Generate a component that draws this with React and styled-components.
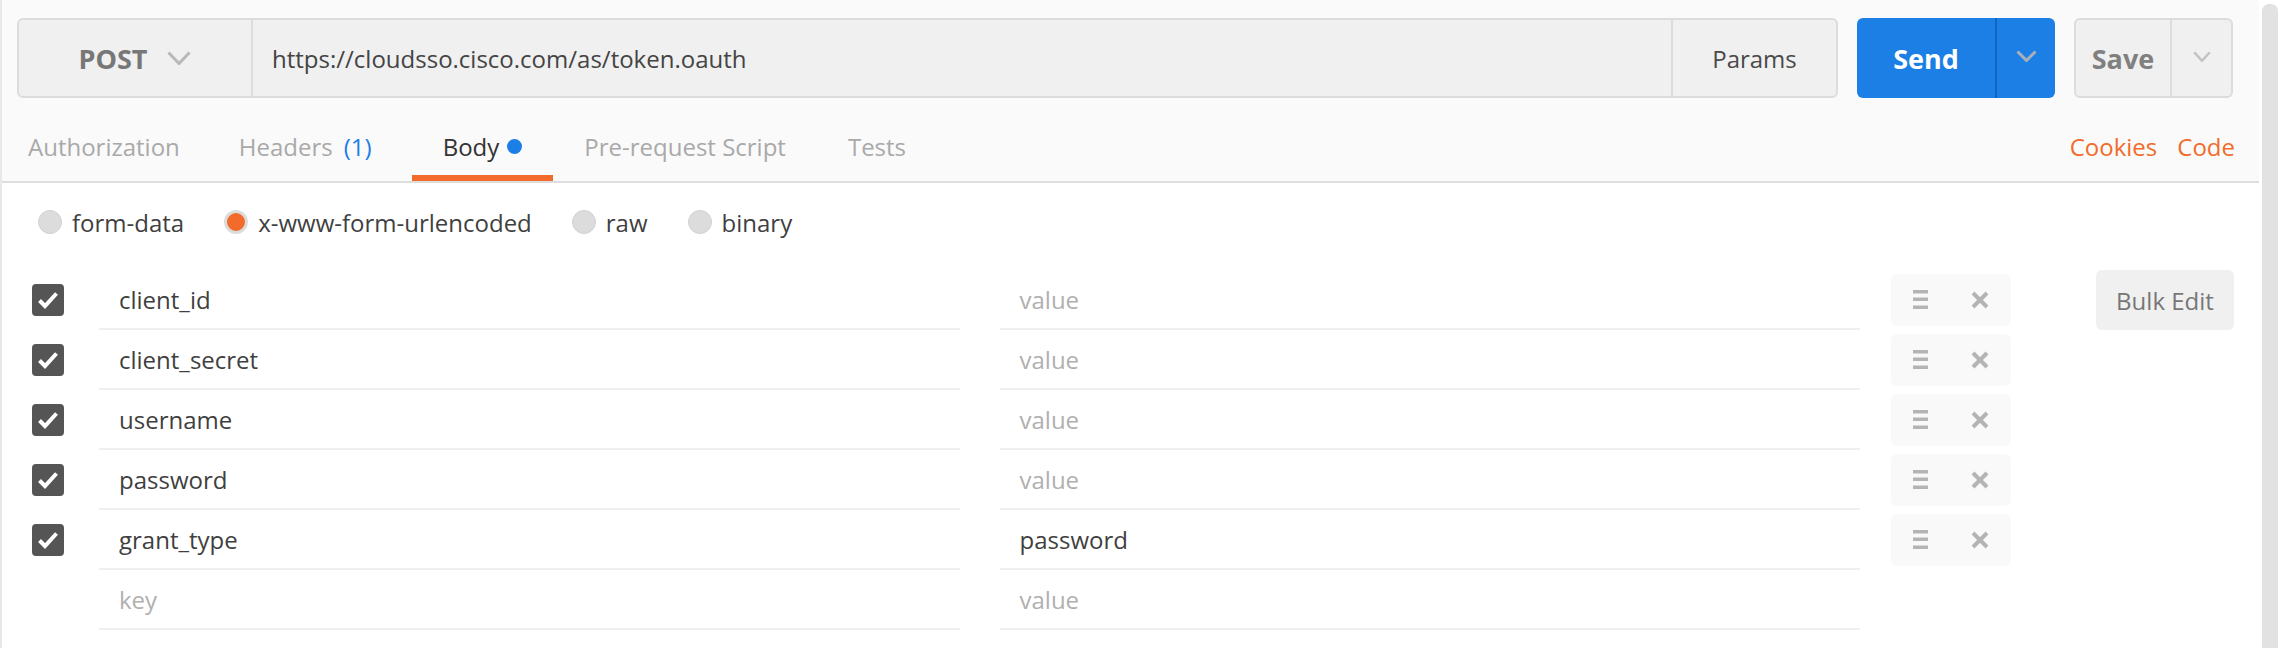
import { createGlobalStyle, styled } from "styled-components";

const GlobalStyle = createGlobalStyle`
  html, body {
    margin: 0;
    padding: 0;
    background: #ffffff;
  }
  body {
    font-family: "Open Sans", "Noto Sans", sans-serif;
    color: #444;
  }
`

const Frame = styled.div`
  display: flex;
  width: 2278px;
  height: 648px;
  border-left: 2px solid #e8e8e8;
  box-sizing: border-box;
  background: #fff;
  overflow: hidden;
`
const Main = styled.div`
  flex: 1;
  display: flex;
  flex-direction: column;
  min-width: 0;
`
const Header = styled.div`
  background: #fafafa;
`
const RequestBar = styled.div`
  display: flex;
  gap: 19px;
  padding: 18px 26px 0 15px;
  height: 98px;
  box-sizing: border-box;
`
const UrlGroup = styled.div`
  flex: 1;
  display: flex;
  border: 2px solid #dcdcdc;
  border-radius: 6px;
  background: #f0f0f0;
  overflow: hidden;
`
const MethodCell = styled.div`
  width: 232px;
  display: flex;
  align-items: center;
  justify-content: center;
  gap: 20px;
  border-right: 2px solid #dcdcdc;
  font-size: 27px;
  font-weight: 700;
  color: #777;
`
const UrlText = styled.div`
  flex: 1;
  display: flex;
  align-items: center;
  padding-left: 19px;
  font-size: 24px;
  color: #444;
`
const ParamsCell = styled.div`
  width: 163px;
  display: flex;
  align-items: center;
  justify-content: center;
  border-left: 2px solid #dcdcdc;
  font-size: 24px;
  color: #4a4a4a;
`
const SplitButton = styled.div`
  display: flex;
  width: ${p => p.$width}px;
  border-radius: 6px;
  overflow: hidden;
  box-sizing: border-box;
  background: ${p => (p.$primary ? "#1b7fe6" : "#f0f0f0")};
  border: ${p => (p.$primary ? "none" : "2px solid #dcdcdc")};
`
const ButtonLabel = styled.div`
  flex: 1;
  display: flex;
  align-items: center;
  justify-content: center;
  font-size: 27px;
  font-weight: 700;
  color: ${p => (p.$primary ? "#fff" : "#808080")};
  border-right: 2px solid ${p => (p.$primary ? "#1466c2" : "#dcdcdc")};
`
const ButtonCaret = styled.div`
  width: ${p => p.$width}px;
  display: flex;
  align-items: center;
  justify-content: center;
  padding-bottom: 4px;
  box-sizing: border-box;
`
const TabBar = styled.div`
  display: flex;
  height: 85px;
  border-bottom: 2px solid #dedede;
  box-sizing: border-box;
  padding-right: 24px;
`
const Tab = styled.div`
  display: flex;
  align-items: center;
  gap: 8px;
  padding: 14px 31px 0;
  font-size: 24px;
  color: ${p => (p.$active ? "#333" : "#a9a9a9")};
  box-shadow: ${p => (p.$active ? "inset 0 -6px 0 #f26b2b" : "none")};

  &:first-child {
    padding-left: 26px;
    padding-right: 28px;
  }
`
const Count = styled.span`
  color: #1b7fe6;
  margin: 0 9px 0 11px;
`
const Dot = styled.span`
  width: 15px;
  height: 15px;
  border-radius: 50%;
  background: #1b7fe6;
`
const Spacer = styled.div`
  flex: 1;
`
const TabLink = styled.div`
  display: flex;
  align-items: center;
  padding: 14px 0 0 20px;
  font-size: 24px;
  color: #f26b2b;
`
const ModeRow = styled.div`
  display: flex;
  align-items: center;
  gap: 40px;
  height: 78px;
  padding-left: 36px;
`
const Radio = styled.label`
  display: flex;
  align-items: center;
  gap: 10px;
  font-size: 24px;
  color: #3f3f3f;
`
const RadioMark = styled.span`
  width: 24px;
  height: 24px;
  border-radius: 50%;
  box-sizing: border-box;
  background: ${p => (p.$on ? "#f26b2b" : "#dcdcdc")};
  border: ${p => (p.$on ? "3px solid #dcdcdc" : "1px solid #d2d2d2")};
`
const Table = styled.div`
  display: flex;
  margin-top: 9px;
  padding: 0 25px 0 30px;
`
const Rows = styled.div`
  flex: 1;
  display: flex;
  flex-direction: column;
`
const Row = styled.div`
  display: flex;
  align-items: center;
  height: 60px;
`
const CheckBox = styled.div`
  width: 32px;
  height: 32px;
  margin-right: 35px;
  border-radius: 4px;
  background: ${p => (p.$checked ? "#555" : "transparent")};
  display: flex;
  align-items: center;
  justify-content: center;
`
const Cell = styled.div`
  flex: 1;
  align-self: stretch;
  display: flex;
  align-items: center;
  padding-left: 20px;
  border-bottom: 2px solid #efefef;
  font-size: 24px;
  color: ${p => (p.$placeholder ? "#b0b0b0" : "#3f3f3f")};
  margin-left: ${p => (p.$value ? "40px" : "0")};
`
const Actions = styled.div`
  width: 120px;
  height: 52px;
  margin-left: 31px;
  box-sizing: border-box;
  display: flex;
  align-items: center;
  justify-content: space-between;
  padding: 0 22px;
  border-radius: 6px;
  background: ${p => (p.$hidden ? "transparent" : "#f9f9f9")};
`
const BulkColumn = styled.div`
  width: 138px;
  margin-left: 85px;
`
const BulkButton = styled.div`
  height: 60px;
  border-radius: 6px;
  background: #f0f0f0;
  display: flex;
  align-items: center;
  justify-content: center;
  font-size: 24px;
  color: #777;
`
const Scrollbar = styled.div`
  width: 19px;
  display: flex;
  padding: 4px 0 0 3px;
  box-sizing: border-box;
`
const Track = styled.div`
  flex: 1;
  background: #e2e2e2;
  border-radius: 7px 7px 0 0;
`

function Chevron({ w, h, color, stroke = 3 }) {
  return (
    <svg width={w} height={h} viewBox={`0 0 ${w} ${h}`}>
      <polyline
        points={`${stroke / 2},${stroke / 2} ${w / 2},${h - stroke / 2} ${w - stroke / 2},${stroke / 2}`}
        fill="none"
        stroke={color}
        strokeWidth={stroke}
      />
    </svg>
  );
}

function CheckIcon() {
  return (
    <svg width="32" height="32" viewBox="0 0 32 32">
      <polyline points="7.5,16.5 13,22 24.5,9.5" fill="none" stroke="#fff" strokeWidth="4" />
    </svg>
  );
}

function DragIcon() {
  return (
    <svg width="15" height="20" viewBox="0 0 15 20">
      <rect x="0" y="0" width="15" height="3.5" fill="#b4b4b4" />
      <rect x="0" y="7.5" width="15" height="3.5" fill="#b4b4b4" />
      <rect x="0" y="15.5" width="15" height="3.5" fill="#b4b4b4" />
    </svg>
  );
}

function CloseIcon() {
  return (
    <svg width="18" height="18" viewBox="0 0 18 18">
      <path d="M2 2 L16 16 M16 2 L2 16" stroke="#b4b4b4" strokeWidth="4" />
    </svg>
  );
}

const params = [
  { key: "client_id", value: "" },
  { key: "client_secret", value: "" },
  { key: "username", value: "" },
  { key: "password", value: "" },
  { key: "grant_type", value: "password" },
];

const modes = [
  { label: "form-data" },
  { label: "x-www-form-urlencoded", on: true },
  { label: "raw" },
  { label: "binary" },
];

export default function App() {
  return (
    <>
      <GlobalStyle />
      <Frame>
        <Main>
          <Header>
            <RequestBar>
              <UrlGroup>
                <MethodCell>
                  POST
                  <Chevron w={24} h={14} color="#b8b8b8" />
                </MethodCell>
                <UrlText>https://cloudsso.cisco.com/as/token.oauth</UrlText>
                <ParamsCell>Params</ParamsCell>
              </UrlGroup>
              <SplitButton $primary $width={198}>
                <ButtonLabel $primary>Send</ButtonLabel>
                <ButtonCaret $width={58}>
                  <Chevron w={21} h={12} color="#aab0b8" />
                </ButtonCaret>
              </SplitButton>
              <SplitButton $width={159}>
                <ButtonLabel>Save</ButtonLabel>
                <ButtonCaret $width={59}>
                  <Chevron w={18} h={11} color="#c2c2c2" stroke={2.5} />
                </ButtonCaret>
              </SplitButton>
            </RequestBar>
            <TabBar>
              <Tab>Authorization</Tab>
              <Tab>
                <span>
                  Headers<Count>(1)</Count>
                </span>
              </Tab>
              <Tab $active>
                Body <Dot />
              </Tab>
              <Tab>Pre-request Script</Tab>
              <Tab>Tests</Tab>
              <Spacer />
              <TabLink>Cookies</TabLink>
              <TabLink>Code</TabLink>
            </TabBar>
          </Header>

          <ModeRow>
            {modes.map(m => (
              <Radio key={m.label}>
                <RadioMark $on={m.on} />
                {m.label}
              </Radio>
            ))}
          </ModeRow>

          <Table>
            <Rows>
              {params.map(p => (
                <Row key={p.key}>
                  <CheckBox $checked>
                    <CheckIcon />
                  </CheckBox>
                  <Cell>{p.key}</Cell>
                  <Cell $value $placeholder={!p.value}>
                    {p.value || "value"}
                  </Cell>
                  <Actions>
                    <DragIcon />
                    <CloseIcon />
                  </Actions>
                </Row>
              ))}
              <Row>
                <CheckBox />
                <Cell $placeholder>key</Cell>
                <Cell $value $placeholder>
                  value
                </Cell>
                <Actions $hidden />
              </Row>
            </Rows>
            <BulkColumn>
              <BulkButton>Bulk Edit</BulkButton>
            </BulkColumn>
          </Table>
        </Main>
        <Scrollbar>
          <Track />
        </Scrollbar>
      </Frame>
    </>
  );
}
